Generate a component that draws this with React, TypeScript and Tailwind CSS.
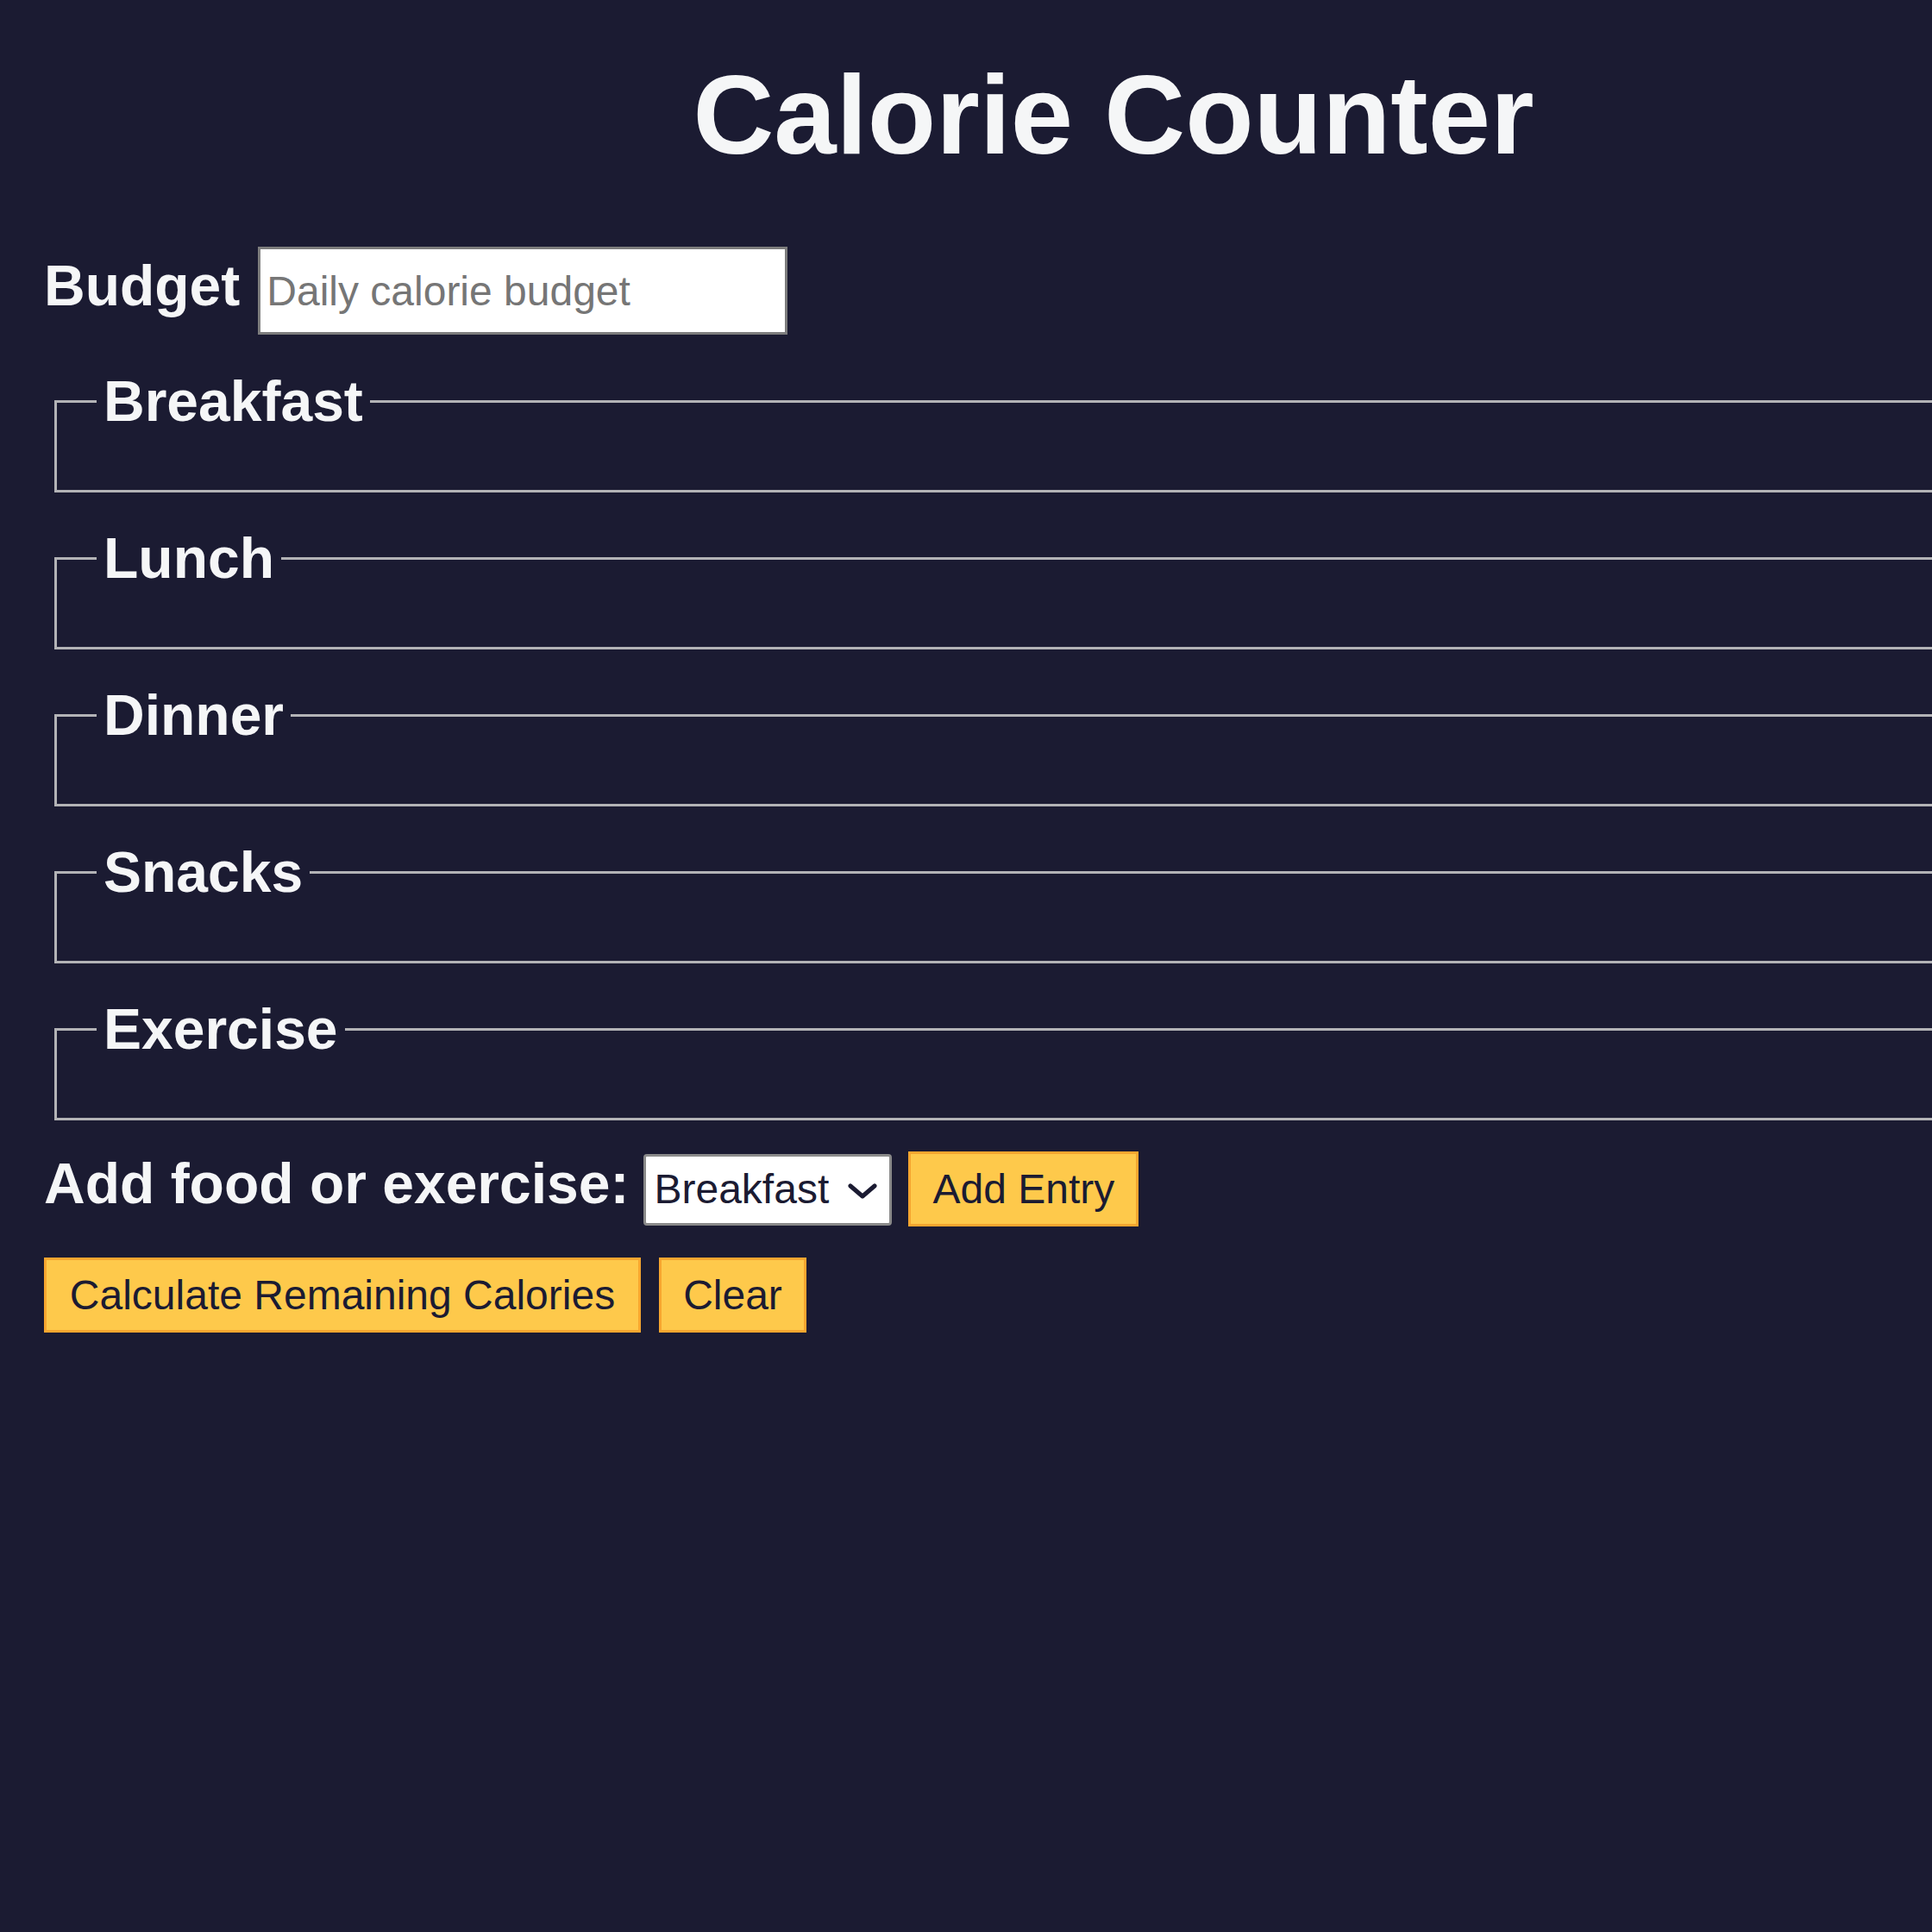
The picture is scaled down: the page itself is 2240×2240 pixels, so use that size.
import { useState } from "react";

const meals = ["Breakfast", "Lunch", "Dinner", "Snacks", "Exercise"];

export default function App() {
  const [budget, setBudget] = useState("");
  const [entry, setEntry] = useState("breakfast");

  const btn =
    "h-[87px] border-[3px] border-[#f7a62f] bg-[#fec94b] text-[48px] leading-[55px] text-[#1b1b32] cursor-pointer";

  return (
    <div className="min-h-screen overflow-hidden bg-[#1b1b32] font-['Liberation_Sans',Arial,sans-serif] text-[#f5f6f7]">
      <main className="w-[2582px] px-[51px] pb-[200px]">
        <h1 className="mt-[58px] text-center text-[130px] font-bold leading-[150px]">Calorie Counter</h1>

        <form onSubmit={(e) => e.preventDefault()}>
          <div className="mt-[78px] flex items-baseline">
            <label htmlFor="budget" className="text-[66px] font-bold leading-[74px]">Budget</label>
            <input
              id="budget"
              type="number"
              value={budget}
              onChange={(e) => setBudget(e.target.value)}
              placeholder="Daily calorie budget"
              className="ml-[21px] h-[102px] w-[614px] border-[3px] border-[#7d7d7d] bg-white pl-[7px] text-[48px] text-[#1b1b32] placeholder:text-[#767676] focus:outline-none"
            />
          </div>

          <div className="mt-[40px] flex flex-col gap-[39px]">
            {meals.map((m) => (
              <fieldset key={m} className="ml-[12px] mr-[12px] border-[3px] border-[#b3b3b6] pl-[46px] pb-[66px]">
                <legend className="px-[8px] text-[66px] font-bold leading-[74px]">{m}</legend>
              </fieldset>
            ))}
          </div>

          <div className="mt-[36px] flex items-baseline">
            <label htmlFor="entry-dropdown" className="text-[66px] font-bold leading-[74px]">Add food or exercise:</label>
            <div className="relative ml-[17px]">
              <select
                id="entry-dropdown"
                value={entry}
                onChange={(e) => setEntry(e.target.value)}
                className="h-[83px] w-[288px] appearance-none rounded-[4px] border-[3px] border-[#8a8a8a] bg-white pl-[9px] text-[48px] text-[#1b1b32]"
              >
                <option value="breakfast">Breakfast</option>
                <option value="lunch">Lunch</option>
                <option value="dinner">Dinner</option>
                <option value="snacks">Snacks</option>
                <option value="exercise">Exercise</option>
              </select>
              <svg className="pointer-events-none absolute left-[237px] top-[34px] h-[19px] w-[34px]" viewBox="0 0 34 19" fill="none">
                <polyline points="3,3 17,15 31,3" stroke="#1b1b32" strokeWidth="5" strokeLinecap="round" strokeLinejoin="round" />
              </svg>
            </div>
            <button type="button" className={`${btn} ml-[19px] h-[86px] w-[267px]`}>Add Entry</button>
          </div>

          <div className="mt-[36px] flex items-start gap-[21px]">
            <button type="submit" className={`${btn} w-[692px]`}>Calculate Remaining Calories</button>
            <button type="button" className={`${btn} w-[171px]`} onClick={() => setBudget("")}>Clear</button>
          </div>
        </form>
      </main>
    </div>
  );
}
